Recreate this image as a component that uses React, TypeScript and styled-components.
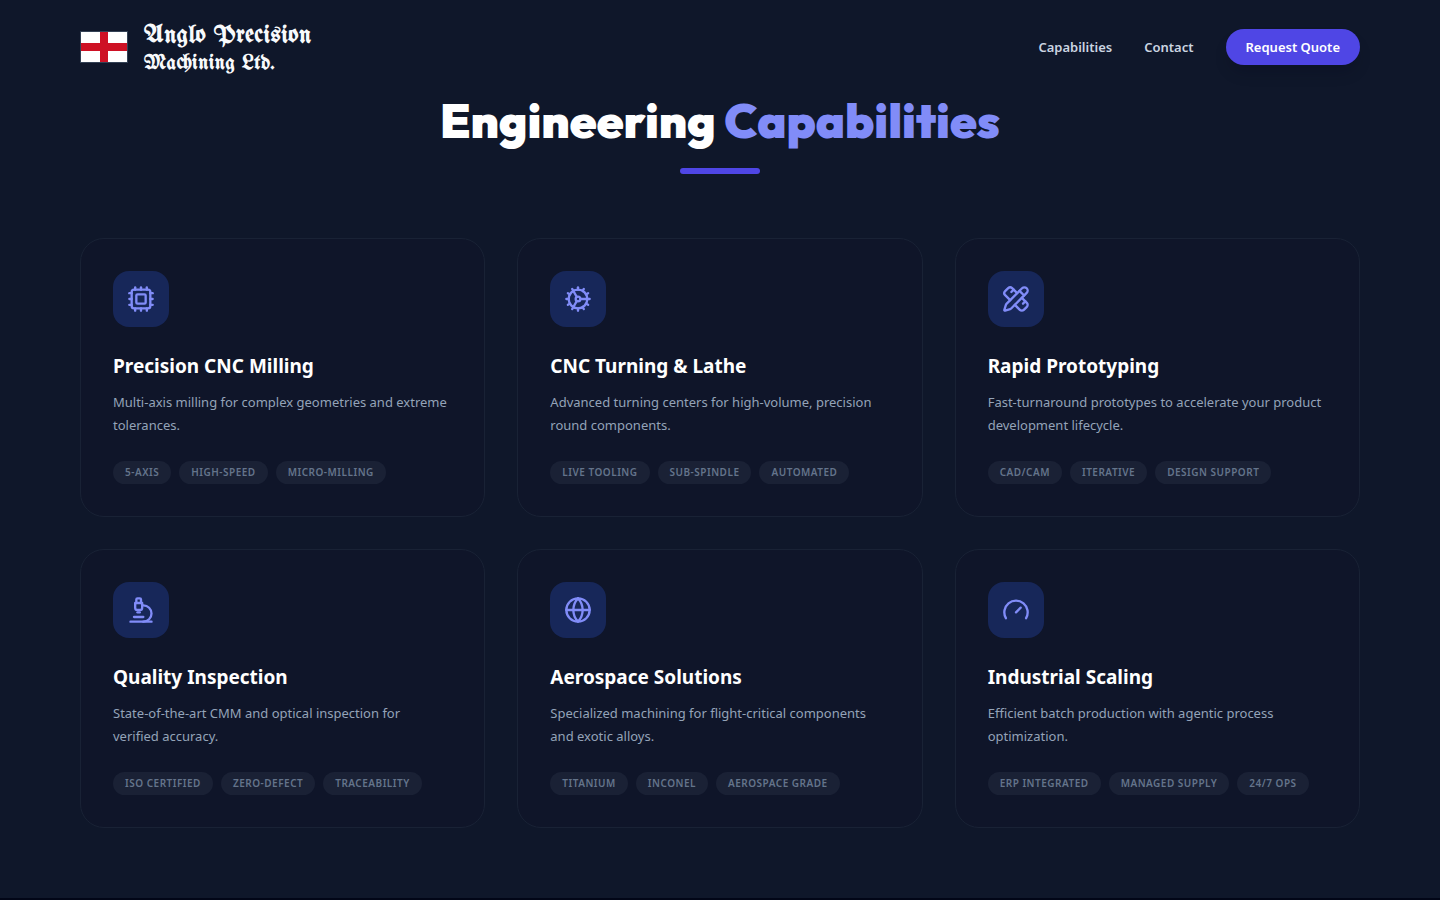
import React from "react";
import styled, { createGlobalStyle } from "styled-components";
import { Cog, Cpu, Gauge, Globe, Microscope, PencilRuler, type LucideIcon } from "lucide-react";

const GlobalStyle = createGlobalStyle`
  *, *::before, *::after { box-sizing: border-box; }
  body {
    margin: 0;
    background: #020617;
    color: #ffffff;
    font-family: "Segoe UI", "Selawik", "Noto Sans", sans-serif;
  }
  h1, h2, h3, p, ul { margin: 0; padding: 0; }
`;

const Page = styled.div`
  background: #0f172a;
  padding-bottom: 70px;
`;

const Container = styled.div`
  max-width: 1280px;
  margin: 0 auto;
`;

const Gutter = styled.div`
  padding: 0 80px;
`;

const Bar = styled(Container)`
  display: flex;
  align-items: center;
  justify-content: space-between;
  height: 94px;
`;

const Brand = styled.a`
  display: flex;
  align-items: center;
  gap: 16px;
  color: #f8fafc;
  text-decoration: none;
`;

const Flag = styled.svg`
  display: block;
  width: 48px;
  height: 32px;
`;

const BrandName = styled.span`
  display: flex;
  flex-direction: column;
  padding-top: 6px;
  font-family: "UnifrakturMaguntia", "Liberation Serif", serif;
  font-weight: 700;
  font-size: 24px;
  line-height: 28px;
  letter-spacing: 0.025em;
`;

const BrandSuffix = styled.span`
  font-size: 20px;
`;

const Nav = styled.nav`
  display: flex;
  align-items: center;
  gap: 32px;
`;

const NavLink = styled.a`
  color: #cbd5e1;
  font-size: 13px;
  font-weight: 600;
  line-height: 20px;
  text-decoration: none;
`;

const QuoteButton = styled.button`
  height: 36px;
  padding: 0 20px;
  border: 0;
  border-radius: 18px;
  background: #4f46e5;
  color: #ffffff;
  font-family: inherit;
  font-size: 13px;
  font-weight: 600;
  line-height: 20px;
  box-shadow: 0 10px 15px -3px rgba(2, 6, 23, 0.2);
  cursor: pointer;
`;

const Heading = styled.div`
  display: flex;
  flex-direction: column;
  align-items: center;
  gap: 24px;
  margin-bottom: 64px;
`;

const Title = styled.h1`
  padding-top: 2px;
  font-family: "Outfit", "Inter", sans-serif;
  font-weight: 900;
  font-size: 48px;
  line-height: 48px;
`;

const Accent = styled.span`
  color: #818cf8;
`;

const Underline = styled.div`
  width: 80px;
  height: 6px;
  border-radius: 3px;
  background: #4f46e5;
`;

const Grid = styled.div`
  display: grid;
  grid-template-columns: repeat(auto-fit, minmax(360px, 1fr));
  gap: 32px;
`;

const Card = styled.article`
  padding: 32px;
  border: 1px solid #192235;
  border-radius: 24px;
  background: #0f1529;
`;

const IconTile = styled.div`
  display: grid;
  place-items: center;
  width: 56px;
  height: 56px;
  margin-bottom: 24px;
  border-radius: 16px;
  background: #172759;
  color: #818cf8;
`;

const CardTitle = styled.h2`
  margin-bottom: 10px;
  font-size: 19px;
  font-weight: 700;
  line-height: 30px;
`;

const CardText = styled.p`
  margin-bottom: 24px;
  color: #94a3b8;
  font-size: 13px;
  line-height: 23px;
`;

const Tags = styled.ul`
  display: flex;
  flex-wrap: wrap;
  gap: 8px;
  list-style: none;
`;

const Tag = styled.li`
  padding: 4px 12px;
  border-radius: 12px;
  background: #1a2135;
  color: #64748b;
  font-size: 10px;
  font-weight: 600;
  line-height: 15px;
  letter-spacing: 0.05em;
  text-transform: uppercase;
`;

type Capability = { icon: LucideIcon; title: string; text: string; tags: string[] };

const capabilities: Capability[] = [
  {
    icon: Cpu,
    title: "Precision CNC Milling",
    text: "Multi-axis milling for complex geometries and extreme tolerances.",
    tags: ["5-Axis", "High-Speed", "Micro-Milling"],
  },
  {
    icon: Cog,
    title: "CNC Turning & Lathe",
    text: "Advanced turning centers for high-volume, precision round components.",
    tags: ["Live Tooling", "Sub-Spindle", "Automated"],
  },
  {
    icon: PencilRuler,
    title: "Rapid Prototyping",
    text: "Fast-turnaround prototypes to accelerate your product development lifecycle.",
    tags: ["CAD/CAM", "Iterative", "Design Support"],
  },
  {
    icon: Microscope,
    title: "Quality Inspection",
    text: "State-of-the-art CMM and optical inspection for verified\u00a0accuracy.",
    tags: ["ISO Certified", "Zero-Defect", "Traceability"],
  },
  {
    icon: Globe,
    title: "Aerospace Solutions",
    text: "Specialized machining for flight-critical components and exotic alloys.",
    tags: ["Titanium", "Inconel", "Aerospace Grade"],
  },
  {
    icon: Gauge,
    title: "Industrial Scaling",
    text: "Efficient batch production with agentic process optimization.",
    tags: ["ERP Integrated", "Managed Supply", "24/7 Ops"],
  },
];

export default function App() {
  return (
    <>
      <GlobalStyle />
      <Page>
        <Gutter as="header">
          <Bar>
            <Brand href="#">
              <Flag viewBox="0 0 48 32" aria-hidden="true">
                <rect width="48" height="32" fill="#334155" />
                <rect x="1" y="1" width="46" height="30" fill="#ffffff" />
                <path d="M1 12h19V1h8v11h19v8H28v11h-8V20H1z" fill="#ce1124" />
              </Flag>
              <BrandName>
                <span>Anglo Precision</span>
                <BrandSuffix>Machining Ltd.</BrandSuffix>
              </BrandName>
            </Brand>
            <Nav>
              <NavLink href="#capabilities">Capabilities</NavLink>
              <NavLink href="#contact">Contact</NavLink>
              <QuoteButton type="button">Request Quote</QuoteButton>
            </Nav>
          </Bar>
        </Gutter>
        <Gutter as="main" id="capabilities">
          <Container>
            <Heading>
              <Title>
                Engineering <Accent>Capabilities</Accent>
              </Title>
              <Underline />
            </Heading>
            <Grid>
              {capabilities.map(({ icon: Icon, title, text, tags }) => (
                <Card key={title}>
                  <IconTile>
                    <Icon size={28} aria-hidden="true" />
                  </IconTile>
                  <CardTitle>{title}</CardTitle>
                  <CardText>{text}</CardText>
                  <Tags>
                    {tags.map((tag) => (
                      <Tag key={tag}>{tag}</Tag>
                    ))}
                  </Tags>
                </Card>
              ))}
            </Grid>
          </Container>
        </Gutter>
      </Page>
    </>
  );
}
